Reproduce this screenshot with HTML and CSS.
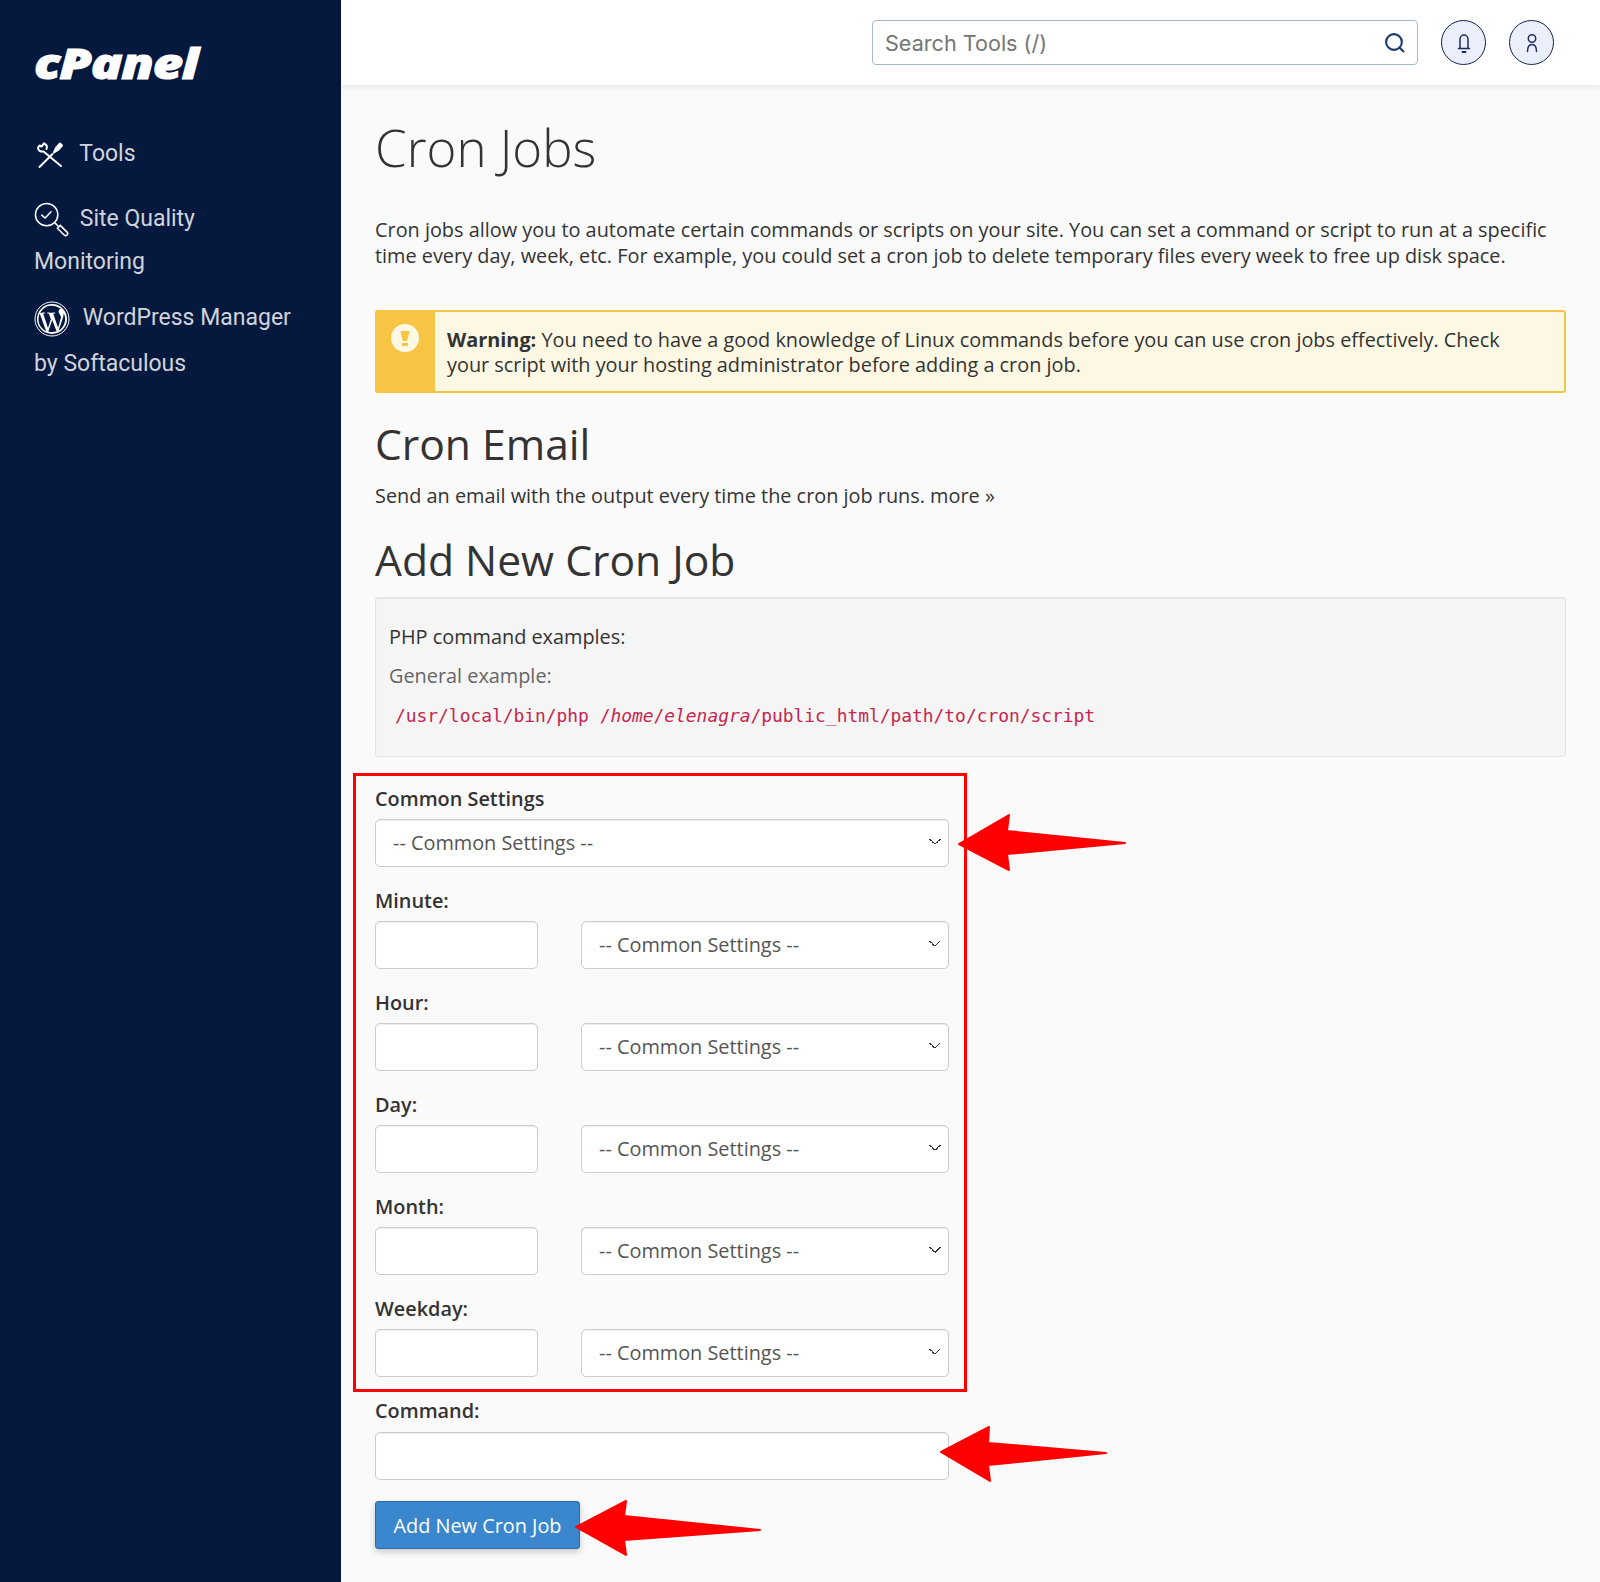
FILE: index.html
```html
<!DOCTYPE html>
<html lang="en">
<head>
    <meta charset="UTF-8">
    <meta name="viewport" content="width=device-width, initial-scale=1.0">
    <title>Cron Jobs - cPanel</title>
    <link rel="stylesheet" href="styles.css">
</head>
<body>
    <div class="layout">
        <!-- sidebar -->
        <aside class="sidebar">
            <div class="logo">cPanel</div>
            <a class="nav-item nav-tools">
                <svg class="nav-icon tools-icon" viewBox="0 0 28 28" fill="none" stroke="#fff" stroke-width="2" stroke-linecap="round" stroke-linejoin="round">
                    <path d="M8 2.500L5.500 5.500 3.500 4.500 2 6.500c0 3 2.500 4.500 5.500 4L25 25"/>
                    <path d="M8 2.500c2.500 1 3.500 3 2.500 5.500"/>
                    <path d="M3.500 26L16.500 13"/>
                    <path d="M18 11.500l2-4.500 4-4.500 2 2-4 4.500z" fill="#fff"/>
                </svg>
                <span>Tools</span>
            </a>
            <a class="nav-item nav-quality">
                <svg class="nav-icon quality-icon" viewBox="0 0 36 36" fill="none" stroke="#fff" stroke-width="1.600" stroke-linecap="round" stroke-linejoin="round">
                    <circle cx="13" cy="13" r="11.500"/>
                    <path d="M8 13.500l3.500 3 6-6.500"/>
                    <path d="M21.500 21.500l3 3"/>
                    <path d="M24 27l3-3 7 7c1 1 1 2 0 3s-2 1-3 0z"/>
                </svg>
                <span>Site Quality</span>
                <br>Monitoring
            </a>
            <a class="nav-item nav-wp">
                <svg class="nav-icon wp-icon" viewBox="0 0 36 36">
                    <circle cx="18" cy="18" r="17" fill="none" stroke="#fff" stroke-width="1"/>
                    <circle cx="18" cy="18" r="15" fill="#fff"/>
                    <path fill="#05193f" d="M4.500 18c0 5.400 3.100 10 7.700 12.200L5.700 12.400A13.400 13.400 0 0 0 4.500 18zm22.500-.7c0-1.700-.6-2.800-1.100-3.700-.7-1.100-1.300-2-1.300-3.100 0-1.200.9-2.400 2.200-2.400h.2A13.500 13.500 0 0 0 6.100 11.700h.9c1.400 0 3.600-.2 3.600-.2.700 0 .8 1 .1 1.100 0 0-.7.100-1.500.1l4.800 14.200 2.900-8.600-2-5.600c-.7 0-1.400-.1-1.400-.1-.7 0-.6-1.100.1-1.100 0 0 2.200.2 3.500.2s3.600-.2 3.600-.2c.7 0 .8 1 .1 1.100 0 0-.7.100-1.500.1l4.700 14.100 1.300-4.400c.6-1.800 1-3.100 1-4.200zm-8.800 1.800l-3.900 11.400a13.500 13.500 0 0 0 8.300-.2l-.1-.2zm11.300-7.400c.1.400.1.900.1 1.400 0 1.400-.3 2.900-1 4.800l-4.100 11.800A13.500 13.500 0 0 0 29.500 11.700z"/>
                </svg>
                <span>WordPress Manager</span>
                <br>by Softaculous
            </a>
        </aside>

        <div class="main">
            <!-- top bar -->
            <header class="topbar">
                <div class="search">
                    <span class="search-text">Search Tools (/)</span>
                    <svg class="search-icon" viewBox="0 0 20 20" fill="none" stroke="#1b3a70" stroke-width="2" stroke-linecap="round">
                        <circle cx="9.500" cy="9.500" r="7.500"/>
                        <path d="M15 15l3.500 3.500"/>
                    </svg>
                </div>
                <div class="round-btn">
                    <svg viewBox="0 0 22 22" fill="none" stroke="#1b2f5c" stroke-width="1.500" stroke-linecap="round" stroke-linejoin="round">
                        <path d="M5.500 16.500h11M7 16.500V7a4 4 0 0 1 8 0v9.500"/>
                        <path d="M9.500 20h3" stroke-width="1.800"/>
                    </svg>
                </div>
                <div class="round-btn">
                    <svg viewBox="0 0 22 22" fill="none" stroke="#1b2f5c" stroke-width="1.500" stroke-linecap="round">
                        <circle cx="11" cy="6.500" r="3.700"/>
                        <path d="M6.500 19.500c0-4.500 1.700-7 4.500-7s4.500 2.500 4.500 7"/>
                    </svg>
                </div>
            </header>

            <div class="content">
                <h1>Cron Jobs</h1>
                <p class="intro">Cron jobs allow you to automate certain commands or scripts on your site. You can set a command or script to run at a specific time every day, week, etc. For example, you could set a cron job to delete temporary files every week to free up disk space.</p>

                <div class="alert">
                    <div class="alert-side">
                        <svg viewBox="0 0 28 28">
                            <circle cx="14" cy="14" r="14" fill="#fdf8e3"/>
                            <path fill="#f7c444" d="M9.500 7h9l-2.300 10h-4.400zM11 19h6v3h-6z"/>
                        </svg>
                    </div>
                    <div class="alert-body"><b>Warning:</b> You need to have a good knowledge of Linux commands before you can use cron jobs effectively. Check your script with your hosting administrator before adding a cron job.</div>
                </div>

                <h2 class="email-title">Cron Email</h2>
                <p class="email-text">Send an email with the output every time the cron job runs. more »</p>

                <h2 class="add-title">Add New Cron Job</h2>
                <div class="well">
                    <p class="well-head">PHP command examples:</p>
                    <p class="well-sub">General example:</p>
                    <code>/usr/local/bin/php /<i>home</i>/<i>elenagra</i>/public_html/path/to/cron/script</code>
                </div>

                <div class="highlight">
                    <div class="field">
                        <label>Common Settings</label>
                        <div class="select-box">-- Common Settings --</div>
                    </div>
                    <div class="field">
                        <label>Minute:</label>
                        <div class="time-row"><div class="text-box"></div><div class="select-box">-- Common Settings --</div></div>
                    </div>
                    <div class="field">
                        <label>Hour:</label>
                        <div class="time-row"><div class="text-box"></div><div class="select-box">-- Common Settings --</div></div>
                    </div>
                    <div class="field">
                        <label>Day:</label>
                        <div class="time-row"><div class="text-box"></div><div class="select-box">-- Common Settings --</div></div>
                    </div>
                    <div class="field">
                        <label>Month:</label>
                        <div class="time-row"><div class="text-box"></div><div class="select-box">-- Common Settings --</div></div>
                    </div>
                    <div class="field">
                        <label>Weekday:</label>
                        <div class="time-row"><div class="text-box"></div><div class="select-box">-- Common Settings --</div></div>
                    </div>
                </div>

                <div class="field command">
                    <label>Command:</label>
                    <div class="text-box wide"></div>
                </div>
                <button class="submit">Add New Cron Job</button>

                <!-- arrows painted over the form -->
                <svg class="arrow arrow-one" viewBox="0 0 170 58"><path fill="#f00" d="M2 31L52 2l-2 16 118 12-118 11 2 16z" stroke="#f00" stroke-width="2" stroke-linejoin="round"/></svg>
                <svg class="arrow arrow-two" viewBox="0 0 170 58"><path fill="#f00" d="M2 27L50 2l-1 16 118 10-118 12 2 16z" stroke="#f00" stroke-width="2" stroke-linejoin="round"/></svg>
                <svg class="arrow arrow-three" viewBox="0 0 190 58"><path fill="#f00" d="M2 28L52 2l-2 15 136 14-136 10 2 15z" stroke="#f00" stroke-width="2" stroke-linejoin="round"/></svg>
            </div>
        </div>
    </div>
</body>
</html>
```

FILE: styles.css
```css
* {
    box-sizing: border-box;
}
body {
    margin: 0;
    font-family: "Open Sans", "Liberation Sans", sans-serif;
    font-size: 19.870px;
    color: #333;
    background-color: #fafafa;
}
.layout {
    display: flex;
    min-height: 1582px;
}

/* sidebar */
.sidebar {
    width: 341px;
    flex: none;
    padding: 38px 34px 0;
    background-color: #05193f;
    color: #d0d3da;
    font-family: Roboto, sans-serif;
    font-size: 23px;
}
.logo {
    height: 50px;
    margin-bottom: 44px;
    color: #fff;
    font-family: "Open Sans", sans-serif;
    font-size: 43px;
    font-weight: 800;
    font-style: italic;
    line-height: 50px;
    letter-spacing: -1px;
    -webkit-text-stroke: 1px #fff;
    transform: scaleX(1.220);
    transform-origin: left center;
}
.nav-item {
    display: block;
    line-height: 43px;
}
.nav-icon {
    vertical-align: middle;
}
.tools-icon {
    width: 28px;
    height: 28px;
    margin: 0 10px 0 2px;
}
.quality-icon {
    width: 35px;
    height: 35px;
    margin-right: 5px;
}
.nav-quality {
    margin-top: 22px;
}
.wp-icon {
    width: 36px;
    height: 36px;
    margin-right: 7px;
}
.nav-wp {
    margin-top: 12px;
    line-height: 46px;
}

/* top bar */
.main {
    flex: 1;
    min-width: 0;
}
.topbar {
    display: flex;
    align-items: center;
    justify-content: flex-end;
    gap: 23px;
    height: 85px;
    padding-right: 46px;
    background-color: #fff;
    box-shadow: 0 2px 6px rgba(0,0,0,0.08);
}
.search {
    display: flex;
    align-items: center;
    justify-content: space-between;
    width: 546px;
    height: 45px;
    padding: 0 12px 0 12px;
    border: 1px solid #aab7d1;
    border-radius: 4px;
    color: #757575;
    font-family: Inter, sans-serif;
    font-size: 21.600px;
}
.search-icon {
    width: 21px;
    height: 21px;
}
.round-btn {
    display: flex;
    align-items: center;
    justify-content: center;
    width: 45px;
    height: 45px;
    border: 1.500px solid #14264f;
    border-radius: 50%;
    background-color: #ebeefb;
}
.round-btn svg {
    width: 22px;
    height: 22px;
}

/* content */
.content {
    position: relative;
    padding: 0 34px;
}
h1 {
    margin: 0;
    padding-top: 28px;
    font-size: 51px;
    font-weight: 300;
    line-height: 68px;
}
.intro {
    margin: 36px 0 0;
    line-height: 25.500px;
}
.alert {
    display: flex;
    margin-top: 42px;
    height: 83px;
    border: 2px solid #f7c444;
    border-radius: 3px;
    background-color: #fdf8e3;
}
.alert-side {
    width: 58px;
    flex: none;
    padding: 12px 0 0 14px;
    background-color: #f7c444;
}
.alert-side svg {
    display: block;
    width: 28px;
    height: 28px;
}
.alert-body {
    padding: 15px 50px 0 12px;
    line-height: 25px;
}
h2 {
    margin: 0;
    font-size: 42.600px;
    font-weight: 400;
    line-height: 58px;
}
.email-title {
    margin-top: 21px;
}
.email-text {
    margin: 10px 0 0;
    line-height: 27px;
}
.add-title {
    margin-top: 21px;
}
.well {
    height: 160px;
    margin-top: 9px;
    padding: 25px 13px 0;
    border: 1px solid #e3e3e3;
    border-radius: 3px;
    background-color: #f5f5f5;
    box-shadow: inset 0 1px 1px rgba(0,0,0,0.05);
}
.well p {
    margin: 0;
    line-height: 27px;
}
.well-sub {
    margin-top: 12px !important;
    color: #666;
}
code {
    display: block;
    margin-top: 12px;
    padding: 2px 6px;
    color: #c7254e;
    font-family: "DejaVu Sans Mono", monospace;
    font-size: 17.900px;
    line-height: 26px;
}

/* form */
.highlight {
    width: 614px;
    height: 619px;
    margin: 16px 0 0 -22px;
    padding: 9px 15px 0 19px;
    border: 3px solid #f00;
}
.field {
    margin-bottom: 20px;
}
label {
    display: block;
    font-weight: 600;
    line-height: 27px;
    margin-bottom: 7px;
}
.select-box,
.text-box {
    height: 48px;
    border: 1.500px solid #ccc;
    border-radius: 5px;
    background-color: #fff;
    box-shadow: inset 0 1px 1px rgba(0,0,0,0.075);
}
.select-box {
    padding: 0 17px;
    color: #555;
    line-height: 45px;
    background-image: linear-gradient(45deg, transparent 50%, #333 50%, #333 64%, transparent 64%), linear-gradient(-45deg, transparent 50%, #333 50%, #333 64%, transparent 64%);
    background-repeat: no-repeat;
    background-size: 6px 6px;
    background-position: right 13px top 19px, right 7px top 19px;
}
.time-row {
    display: flex;
    gap: 43px;
}
.time-row .text-box {
    width: 163px;
    flex: none;
}
.time-row .select-box {
    flex: 1;
}
.command {
    width: 574px;
    margin: 5px 0 21px;
}
.command label {
    margin-bottom: 8px;
}
.submit {
    display: block;
    width: 205px;
    height: 48px;
    padding: 0;
    border: 1px solid #2e6da4;
    border-radius: 3px;
    background-color: #3a87cd;
    box-shadow: 0 3px 6px rgba(0,0,0,0.2);
    color: #fff;
    font-family: inherit;
    font-size: 19.870px;
}

/* arrows */
.arrow {
    position: absolute;
}
.arrow-one {
    top: 728px;
    left: 616px;
    width: 170px;
    height: 58px;
}
.arrow-two {
    top: 1340px;
    left: 598px;
    width: 170px;
    height: 58px;
}
.arrow-three {
    top: 1414px;
    left: 233px;
    width: 190px;
    height: 58px;
}
```
